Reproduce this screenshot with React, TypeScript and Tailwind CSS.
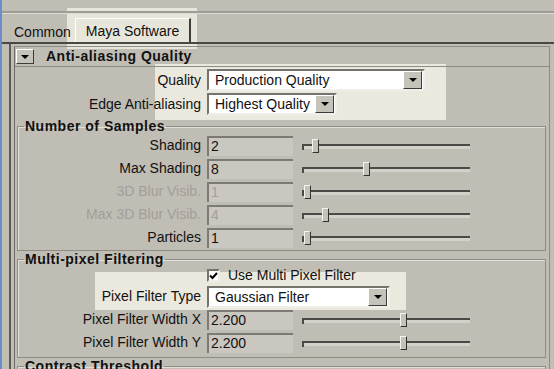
import React from "react";

type SampleRow = { label: string; value: string; thumb: number; disabled?: boolean };

const samples: SampleRow[] = [
  { label: "Shading", value: "2", thumb: 10 },
  { label: "Max Shading", value: "8", thumb: 61 },
  { label: "3D Blur Visib.", value: "1", thumb: 2, disabled: true },
  { label: "Max 3D Blur Visib.", value: "4", thumb: 20, disabled: true },
  { label: "Particles", value: "1", thumb: 2 },
];

const filterWidths: SampleRow[] = [
  { label: "Pixel Filter Width X", value: "2.200", thumb: 98 },
  { label: "Pixel Filter Width Y", value: "2.200", thumb: 98 },
];

function ArrowButton({ className = "" }: { className?: string }) {
  return (
    <span className={`flex items-center justify-center border border-t-white border-l-white border-r-[#3d3b37] border-b-[#3d3b37] bg-[#c6c3bb] ${className}`}>
      <span className="h-0 w-0 border-x-[4px] border-t-[4px] border-x-transparent border-t-black" />
    </span>
  );
}

function Dropdown({ value, width }: { value: string; width: string }) {
  return (
    <div className={`flex h-[22px] items-center border-2 border-t-[#76736c] border-l-[#76736c] border-r-[#efeee8] border-b-[#efeee8] bg-white ${width}`}>
      <span className="flex-1 pl-[6px] text-[14px] leading-none text-[#111]">{value}</span>
      <ArrowButton className="mr-[1px] h-[18px] w-[19px]" />
    </div>
  );
}

function Slider({ thumb }: { thumb: number }) {
  return (
    <div className="relative ml-[9px] h-[14px] w-[168px]">
      <div className="absolute left-0 right-0 top-[5px] h-[2px] bg-[#4c4a46]" />
      <div className="absolute left-[2px] right-0 top-[7px] h-[3px] bg-[#d3d1ca]" />
      <div className="absolute left-0 top-[5px] h-[6px] w-[2px] bg-[#4c4a46]" />
      <div
        className="absolute top-0 h-[14px] w-[7px] border border-t-[#f4f3ee] border-l-[#f4f3ee] border-r-[#33312e] border-b-[#33312e] bg-[#c4c1b9]"
        style={{ left: thumb }}
      />
    </div>
  );
}

function FieldRow({ row }: { row: SampleRow }) {
  const tone = row.disabled ? "text-[#a29f98]" : "text-[#111]";
  return (
    <div className="flex h-[23px] items-center">
      <span className={`w-[183px] text-right text-[14px] ${tone}`}>{row.label}</span>
      <div className="ml-[6px] flex h-[20px] w-[86px] items-center border-t-2 border-l-2 border-t-[#7d7a73] border-l-[#7d7a73] bg-[#cac7c0] pl-[2px]">
        <span className={`text-[14px] ${tone}`}>{row.value}</span>
      </div>
      <Slider thumb={row.thumb} />
    </div>
  );
}

function SubFrame({ title, children }: { title: string; children?: React.ReactNode }) {
  return (
    <fieldset className="ml-[2px] mr-[3px] border border-[#8f8c85] shadow-[inset_1px_1px_0_#e2e0da]">
      <legend className="ml-[6px] px-[1px] text-[14px] font-bold leading-[14px] tracking-[0.5px] text-[#111]">{title}</legend>
      {children}
    </fieldset>
  );
}

export default function App() {
  return (
    <div className="relative isolate h-[369px] w-[554px] overflow-hidden border-l-2 border-[#6d8cc8] bg-[#c0bdb5] font-['Liberation_Sans',Arial,sans-serif] text-[#111]">
      {/* highlight marks */}
      <div className="absolute left-[65px] top-[8px] -z-10 h-[41px] w-[130px] bg-[#e8e6da]" />
      <div className="absolute left-[153px] top-[64px] -z-10 h-[56px] w-[291px] bg-[#ebe9de]" />
      <div className="absolute left-[93px] top-[272px] -z-10 h-[38px] w-[311px] bg-[#ebe9de]" />

      <div className="h-[14px] border-b border-b-[#dedcd6] shadow-[inset_0_-2px_0_#9f9c95]" />

      <div className="flex h-[28px] items-end pl-[12px] text-[14px]">
        <span className="pb-[2px] leading-[16px]">Common</span>
        <div className="ml-[4px] flex h-[24px] items-start border-l border-t border-white border-r-2 border-r-[#3f3d3a] px-[10px] pt-[5px] leading-[15px]">
          Maya Software
        </div>
      </div>
      <div className="h-[2px] bg-[#4a4844]" />

      <div className="ml-[7px] border-l-2 border-[#5e5b56] pt-[2px]">
        <div className="ml-[3px] mr-[4px] border border-[#8f8c85] border-l-[#6e6b65]">
          <div className="flex h-[20px] items-center border-b border-[#8f8c85]">
            <ArrowButton className="ml-[1px] h-[15px] w-[18px]" />
            <span className="ml-[12px] text-[14px] font-bold tracking-[0.5px]">Anti-aliasing Quality</span>
          </div>
          <div className="pb-[3px] pt-[1px]">
            <div className="flex h-[24px] items-center">
              <span className="w-[186px] text-right text-[14px]">Quality</span>
              <div className="ml-[6px]">
                <Dropdown value="Production Quality" width="w-[218px]" />
              </div>
            </div>
            <div className="flex h-[24px] items-center">
              <span className="w-[186px] text-right text-[14px]">Edge Anti-aliasing</span>
              <div className="ml-[6px]">
                <Dropdown value="Highest Quality" width="w-[130px]" />
              </div>
            </div>
          </div>

          <SubFrame title="Number of Samples">
            <div className="pb-[1px] pt-[1px]">
              {samples.map((r) => (
                <FieldRow key={r.label} row={r} />
              ))}
            </div>
          </SubFrame>

          <div className="h-[1px]" />
          <SubFrame title="Multi-pixel Filtering">
            <div className="pb-[3px]">
              <div className="flex h-[19px] items-center pl-[189px]">
                <span className="flex h-[13px] w-[13px] items-center justify-center border-2 border-t-[#76736c] border-l-[#76736c] border-r-[#efeee8] border-b-[#efeee8] bg-white">
                  <svg width="9" height="8" viewBox="0 0 9 8">
                    <path d="M1 3.5 L3.5 6 L8 1" fill="none" stroke="#000" strokeWidth="2" />
                  </svg>
                </span>
                <span className="ml-[8px] text-[14px]">Use Multi Pixel Filter</span>
              </div>
              <div className="flex h-[23px] items-center">
                <span className="w-[183px] text-right text-[14px]">Pixel Filter Type</span>
                <div className="ml-[6px]">
                  <Dropdown value="Gaussian Filter" width="w-[183px]" />
                </div>
              </div>
              {filterWidths.map((r) => (
                <FieldRow key={r.label} row={r} />
              ))}
            </div>
          </SubFrame>

          <div className="h-[1px]" />
          <SubFrame title="Contrast Threshold">
            <div className="h-[40px]" />
          </SubFrame>
        </div>
      </div>
    </div>
  );
}
